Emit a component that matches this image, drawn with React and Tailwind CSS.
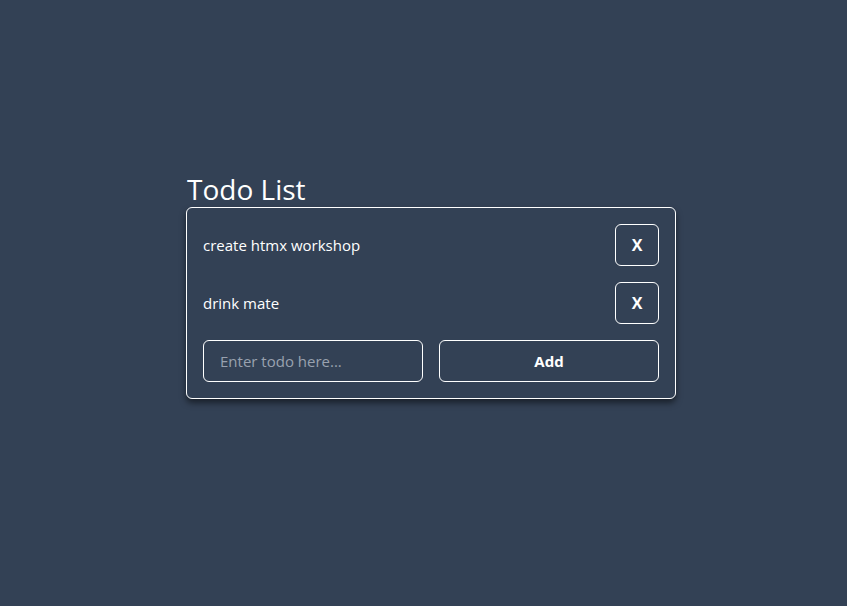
export default function App() {
  const todos = ["create htmx workshop", "drink mate"];

  return (
    <div
      className="min-h-screen bg-[#334155] text-white pl-[186px] pt-[171px]"
      style={{ fontFamily: '"Open Sans", "Noto Sans", sans-serif' }}
    >
      <div className="w-[490px]">
        <h1 className="text-[28px] leading-9 pl-px">Todo List</h1>
        <div className="border border-white rounded-md p-4 flex flex-col gap-4 shadow-[0_4px_6px_rgba(0,0,0,0.5)]">
          {todos.map((todo) => (
            <div key={todo} className="flex items-center justify-between">
              <span className="text-[15px]">{todo}</span>
              <button className="w-11 h-[42px] border border-white rounded-md font-bold text-base">
                X
              </button>
            </div>
          ))}
          <div className="flex gap-4">
            <input
              type="text"
              placeholder="Enter todo here..."
              className="w-[220px] h-[42px] border border-white rounded-md bg-transparent px-4 text-[15px] placeholder:text-gray-400 outline-none"
            />
            <button className="w-[220px] h-[42px] border border-white rounded-md font-bold text-[15px]">
              Add
            </button>
          </div>
        </div>
      </div>
    </div>
  );
}
